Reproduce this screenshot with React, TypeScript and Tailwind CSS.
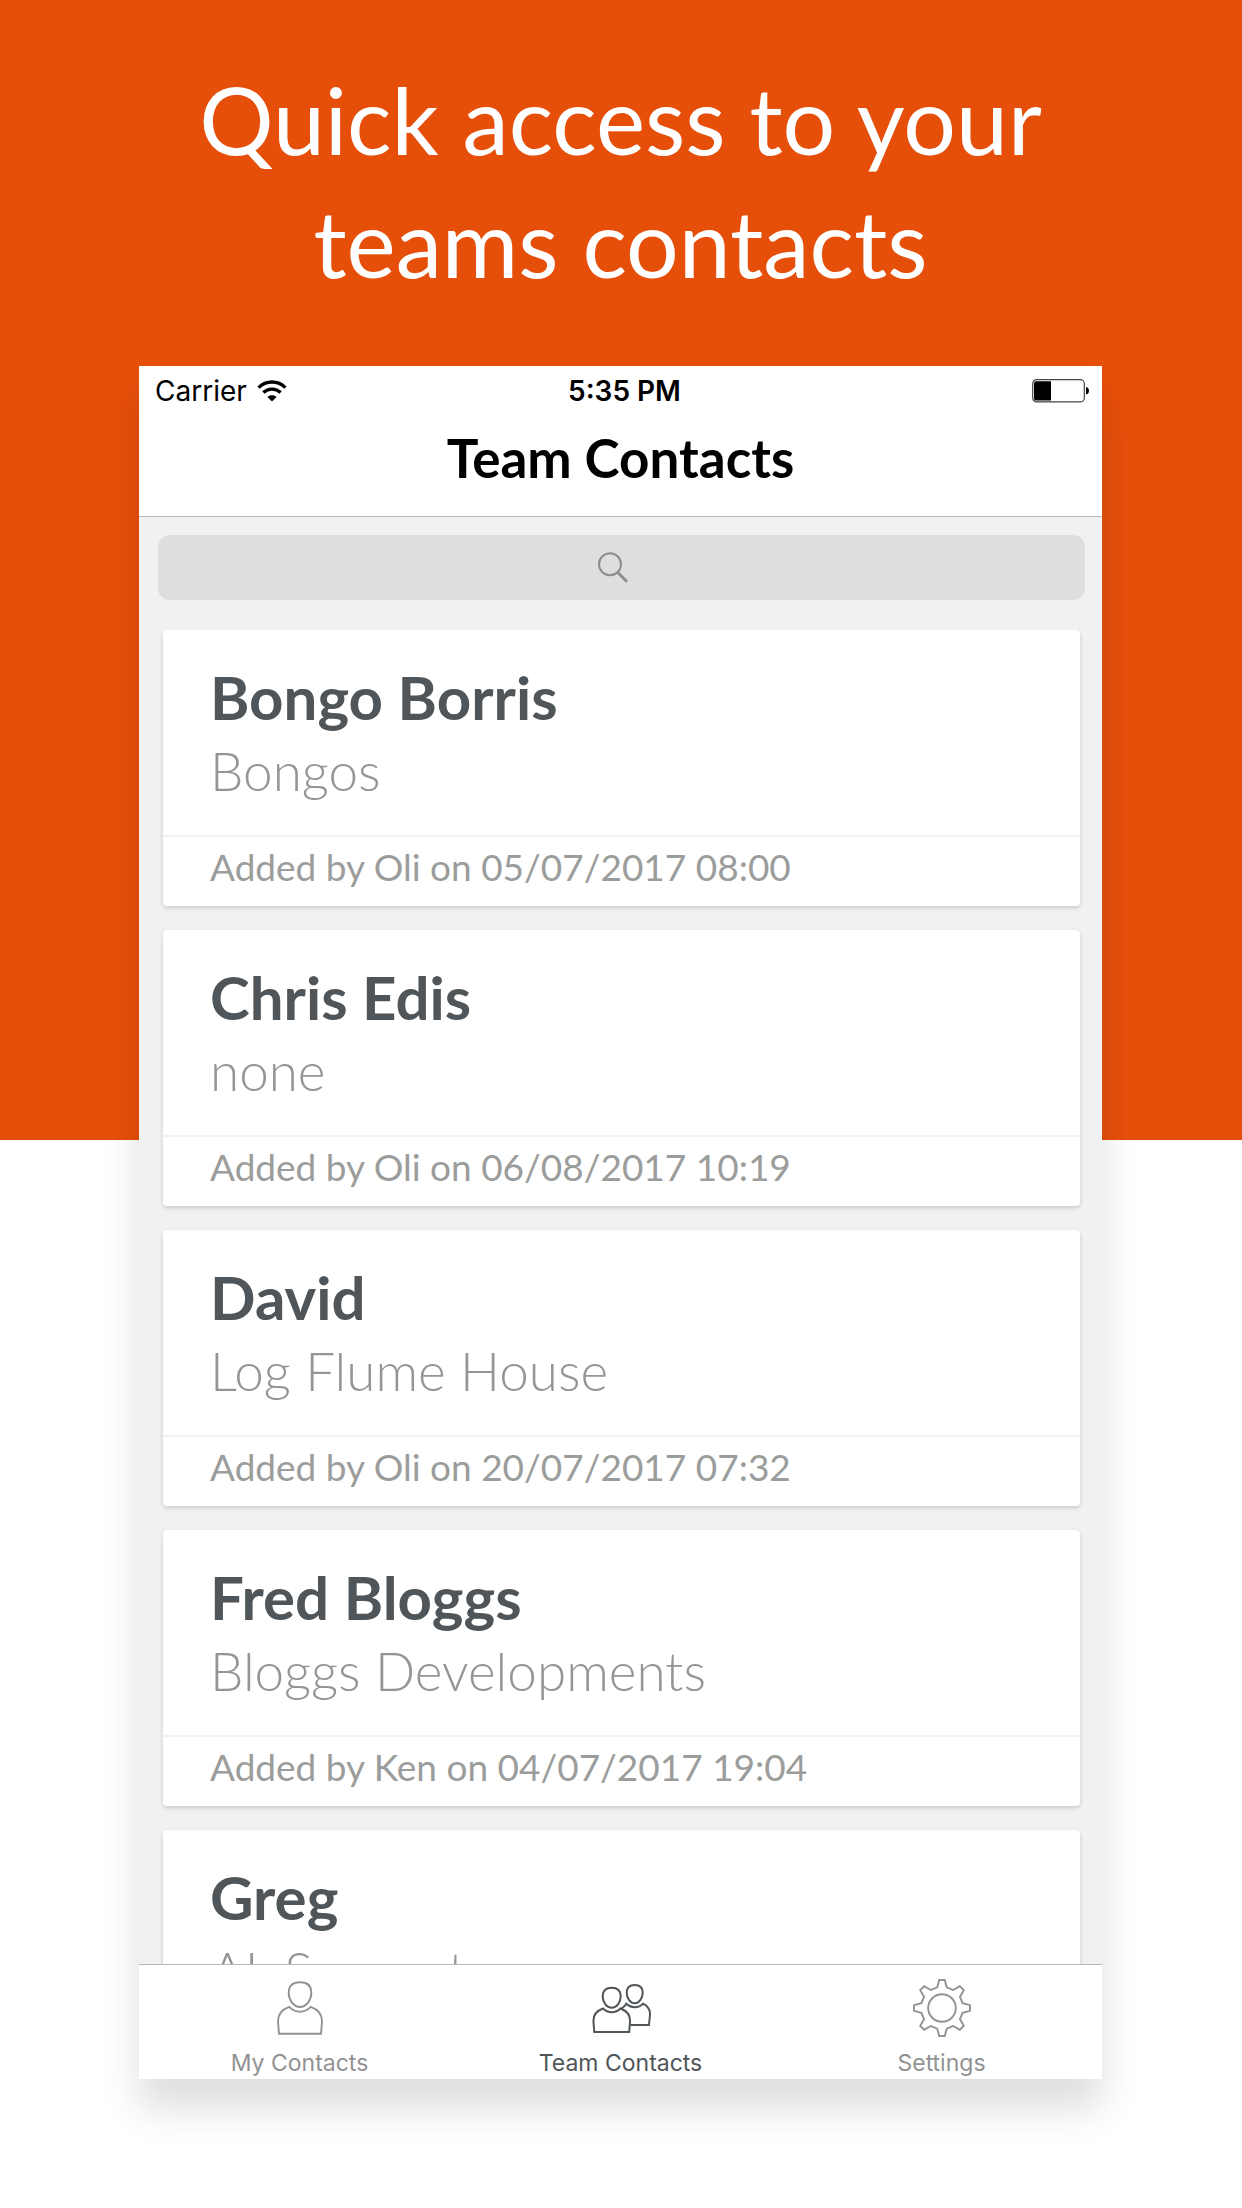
import type { ReactNode } from "react";

type Contact = { name: string; company: string; added?: string };

const contacts: Contact[] = [
  { name: "Bongo Borris", company: "Bongos", added: "Added by Oli on 05/07/2017 08:00" },
  { name: "Chris Edis", company: "none", added: "Added by Oli on 06/08/2017 10:19" },
  { name: "David", company: "Log Flume House", added: "Added by Oli on 20/07/2017 07:32" },
  { name: "Fred Bloggs", company: "Bloggs Developments", added: "Added by Ken on 04/07/2017 19:04" },
  { name: "Greg", company: "AL Support" },
];

function WifiIcon() {
  return (
    <svg width="30" height="22" viewBox="0 0 30 22" fill="none" stroke="black" strokeWidth="3.4" aria-hidden="true">
      <path d="M1.6 7.6C9 0.2 21 0.2 28.4 7.6" />
      <path d="M6.4 12.6C11.3 8 18.7 8 23.6 12.6" />
      <path d="M10.4 17L15 21.6L19.6 17C17 14.6 13 14.6 10.4 17Z" fill="black" stroke="none" />
    </svg>
  );
}

function BatteryIcon() {
  return (
    <svg width="58" height="24" viewBox="0 0 58 24" role="img" aria-label="Battery">
      <rect x="0.7" y="0.7" width="51.6" height="22.2" rx="4" fill="white" stroke="#444" strokeWidth="1.2" />
      <path d="M4 2.2H19V21.4H4Q2 21.4 2 19.4V4.2Q2 2.2 4 2.2Z" />
      <path d="M54 8C58 8.6 58 15 54 15.6Z" />
    </svg>
  );
}

function SearchIcon() {
  return (
    <svg width="30" height="31" viewBox="0 0 30 31" fill="none" stroke="#8c8d8f" aria-hidden="true">
      <circle cx="12" cy="12.2" r="11" strokeWidth="2" />
      <path d="M19.6 20.2L29 29.8" strokeWidth="2.8" />
    </svg>
  );
}

function PersonIcon() {
  return (
    <svg width="48" height="56" viewBox="0 0 48 56" fill="none" stroke="currentColor" strokeWidth="1.9" aria-hidden="true">
      <path d="M24 2.3C31 2.3 35.3 5.5 35.3 12.8C35.3 20 30.3 27 24 27S12.7 20 12.7 12.8C12.7 5.5 17 2.3 24 2.3Z" />
      <path d="M13.2 26.8C5.5 29.6 1.9 34 2 41.5L3 53.8H45L46 41.5C46.1 34 42.5 29.6 34.8 26.8C28.5 33.3 19.5 33.3 13.2 26.8Z" />
    </svg>
  );
}

function PeopleIcon() {
  return (
    <svg width="60" height="51" viewBox="0 0 60 51" fill="none" stroke="currentColor" strokeWidth="2" aria-hidden="true">
      <path d="M20.7 4.7C26.5 4.7 29.7 7.5 29.7 13.2C29.7 19.5 25.6 24.7 20.7 24.7S11.7 19.5 11.7 13.2C11.7 7.5 14.9 4.7 20.7 4.7Z" />
      <path d="M12 25.5C5.5 27.8 2.3 31.5 2.4 38L3.3 49H38.2L39.1 38C39.2 31.5 36 27.8 29.4 25.5C24.5 30.5 17 30.5 12 25.5Z" />
      <path d="M43.7 2C49 2 51.7 4.5 51.7 9.7C51.7 15.5 48 20.3 43.7 20.3S35.7 15.5 35.7 9.7C35.7 4.5 38.4 2 43.7 2Z" />
      <path d="M30.5 25.8C32 24.5 34.2 23 35.2 20.8C40 25.4 47.5 25.4 52 20.6C57 23 59.2 26.5 59 31.5L58 42H39.5" />
    </svg>
  );
}

const toothPoints: [number, number][] = [
  [-4.8, -20.6],
  [-2.8, -28],
  [2.8, -28],
  [4.8, -20.6],
];

const gearPoints = Array.from({ length: 8 }, (_, i) => {
  const a = (i * Math.PI) / 4;
  return toothPoints
    .map(([x, y]) => `${(x * Math.cos(a) - y * Math.sin(a)).toFixed(2)},${(x * Math.sin(a) + y * Math.cos(a)).toFixed(2)}`)
    .join(" ");
}).join(" ");

function GearIcon() {
  return (
    <svg width="60" height="60" viewBox="-30 -30 60 60" fill="none" stroke="currentColor" strokeWidth="1.9" aria-hidden="true">
      <polygon points={gearPoints} />
      <circle r="13.8" />
    </svg>
  );
}

function ContactCard({ name, company, added }: Contact) {
  return (
    <li className="shrink-0 rounded-[4px] bg-white shadow-[0_2px_4px_rgba(0,0,0,0.16)]">
      <div className="border-b-2 border-[#f1f1f1] px-[47px] pt-[31px] pb-[26px]">
        <h2 className="text-[60px] leading-[72px] font-bold text-[#4f5558]">{name}</h2>
        <p className="text-[53px] leading-[76px] font-light text-[#949695]">{company}</p>
      </div>
      {added && <p className="px-[47px] pb-[9px] text-[37px] leading-[60px] text-[#9b9d9c]">{added}</p>}
    </li>
  );
}

function Tab({ label, active, children }: { label: string; active?: boolean; children: ReactNode }) {
  return (
    <button
      type="button"
      aria-current={active ? "page" : undefined}
      className={`flex flex-1 flex-col items-center pb-0.5 font-[Inter,sans-serif] text-[23px] leading-7 ${active ? "text-[#4f5558]" : "text-[#929292]"}`}
    >
      <span className="flex h-[84px] items-center pt-0.5">{children}</span>
      {label}
    </button>
  );
}

export default function App() {
  return (
    <main className="flex h-screen flex-col bg-[linear-gradient(#e64f0a_1140px,#fff_1140px)] pt-[58px] pr-[140px] pb-[129px] pl-[139px] font-[Lato,sans-serif]">
      <h1 className="pb-[62px] text-center text-[93px] leading-[123px] text-white">
        Quick access to your
        <br />
        teams contacts
      </h1>

      <section className="flex min-h-0 flex-1 flex-col bg-[#f1f1f1] shadow-[0_30px_36px_rgba(0,0,0,0.13)]">
        <header className="border-b border-[#b8b8b8] bg-white pb-4">
          <div className="grid h-[50px] grid-cols-[1fr_auto_1fr] items-center pr-3 pl-4 font-[Inter,sans-serif] text-[28px]">
            <span className="flex items-center gap-2.5">
              Carrier
              <WifiIcon />
            </span>
            <span className="pl-1 font-semibold">5:35 PM</span>
            <span className="flex justify-end">
              <BatteryIcon />
            </span>
          </div>
          <h2 className="text-center text-[53px] leading-[84px] font-bold text-black">Team Contacts</h2>
        </header>

        <label className="mt-[18px] mr-[17px] ml-[19px] flex h-[65px] shrink-0 cursor-text items-center justify-center rounded-xl bg-[#dddee0]">
          <SearchIcon />
          <input
            type="text"
            aria-label="Search contacts"
            className="field-sizing-content min-w-[18px] bg-transparent text-[32px] text-[#4f5558] outline-none"
          />
        </label>

        <ul className="mt-[30px] flex min-h-0 flex-1 flex-col gap-6 overflow-hidden pr-[22px] pl-6">
          {contacts.map((c) => (
            <ContactCard key={c.name} {...c} />
          ))}
        </ul>

        <nav className="flex shrink-0 border-t border-[#b8b8b8] bg-white">
          <Tab label="My Contacts">
            <PersonIcon />
          </Tab>
          <Tab label="Team Contacts" active>
            <PeopleIcon />
          </Tab>
          <Tab label="Settings">
            <GearIcon />
          </Tab>
        </nav>
      </section>
    </main>
  );
}
